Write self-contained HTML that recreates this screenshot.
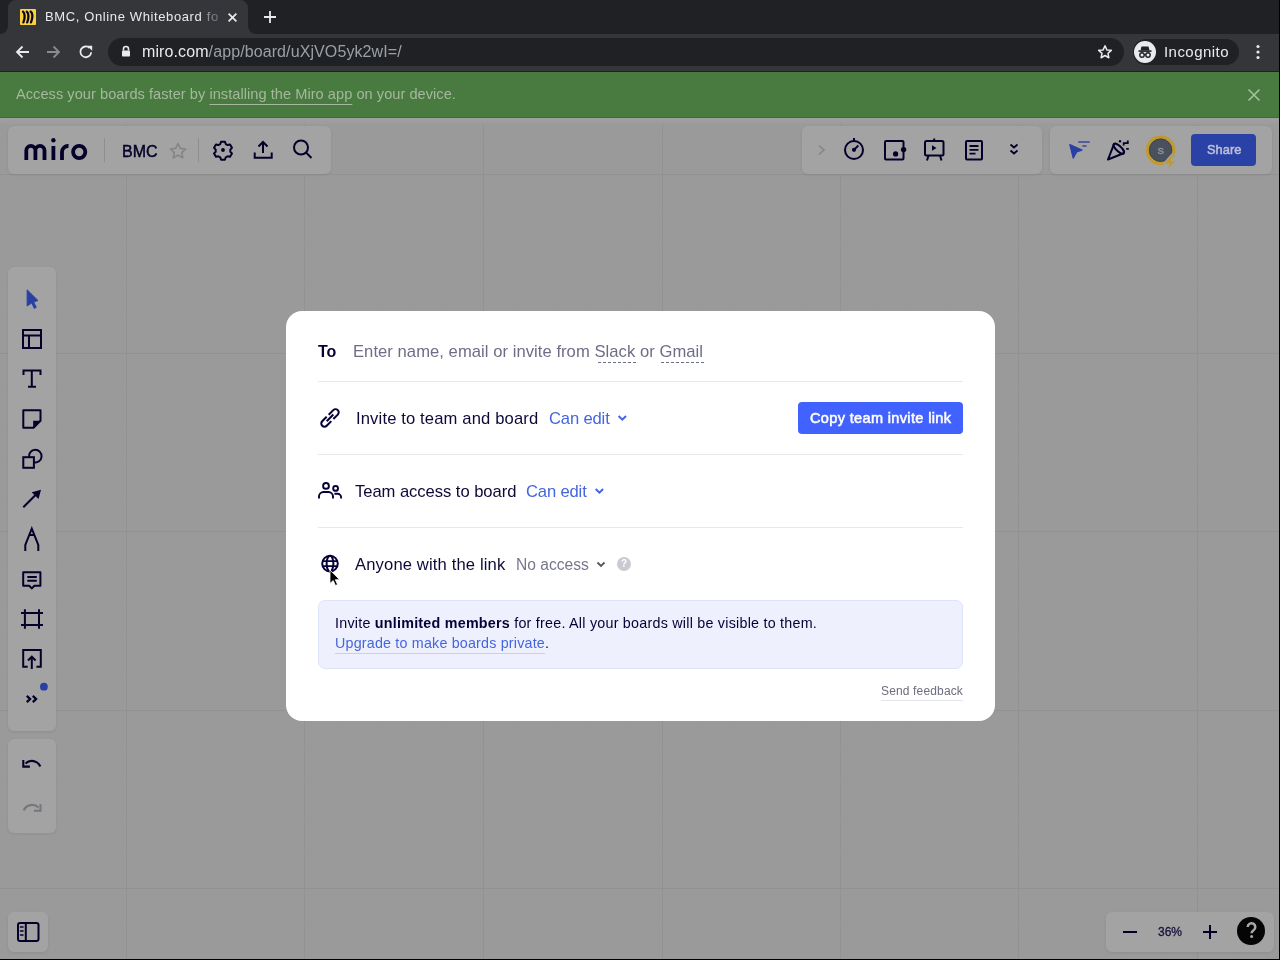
<!DOCTYPE html>
<html><head><meta charset="utf-8">
<style>
*{box-sizing:border-box;margin:0;padding:0}
html,body{width:1280px;height:960px;overflow:hidden;background:#9a9a9a;font-family:"Liberation Sans",sans-serif}
.a{position:absolute}
.t{position:absolute;white-space:nowrap;line-height:1;will-change:transform}
svg{position:absolute;overflow:visible}
</style></head><body>

<!-- ===== Browser chrome ===== -->
<div class="a" style="left:0;top:0;width:1280px;height:34px;background:#202124"></div>
<!-- active tab -->
<div class="a" style="left:8px;top:0;width:240px;height:34px;background:#35363a;border-radius:8px 8px 0 0"></div>
<div class="a" style="left:0;top:26px;width:8px;height:8px;background:#35363a"></div>
<div class="a" style="left:0;top:18px;width:8px;height:16px;background:#202124;border-radius:0 0 8px 0"></div>
<div class="a" style="left:248px;top:26px;width:8px;height:8px;background:#35363a"></div>
<div class="a" style="left:248px;top:18px;width:8px;height:16px;background:#202124;border-radius:0 0 0 8px"></div>
<!-- favicon -->
<div class="a" style="left:20px;top:9px;width:16px;height:16px;background:#fcd13a;border-radius:1px"></div>
<svg style="left:20px;top:9px" width="16" height="16" viewBox="0 0 16 16"><g fill="none" stroke="#0a0620" stroke-width="2.3" stroke-linecap="round"><path d="M3 2.6C5 4 5.2 9 3.4 13.4"/><path d="M6.8 2.6C8.8 4 9 9 7.2 13.4"/><path d="M10.6 2.6C13 4 12.8 9 11 13.4"/></g></svg>
<div class="t" style="left:44.5px;top:10px;font-size:13px;letter-spacing:0.62px;color:#e8eaed">BMC, Online Whiteboard fo</div>
<div class="a" style="left:202px;top:6px;width:24px;height:22px;background:linear-gradient(90deg,rgba(53,54,58,0),rgba(53,54,58,0.45) 4px,rgba(53,54,58,0.7) 16px,#35363a 22px)"></div>
<svg style="left:227.5px;top:12.5px" width="9" height="9" viewBox="0 0 9 9"><path d="M0.6 0.6L8.4 8.4M8.4 0.6L0.6 8.4" stroke="#e8eaed" stroke-width="1.7"/></svg>
<svg style="left:263px;top:10px" width="14" height="14" viewBox="0 0 14 14"><path d="M7 1v12M1 7h12" stroke="#e8eaed" stroke-width="1.8"/></svg>

<!-- toolbar -->
<div class="a" style="left:0;top:34px;width:1280px;height:38px;background:#35363a"></div>
<div class="a" style="left:0;top:71px;width:1280px;height:1px;background:#1f2023"></div>
<svg style="left:15px;top:45px" width="14" height="14" viewBox="0 0 14 14"><path d="M14 7H2M7.5 1.5L2 7l5.5 5.5" stroke="#e8eaed" stroke-width="1.8" fill="none"/></svg>
<svg style="left:47px;top:45px" width="14" height="14" viewBox="0 0 14 14"><path d="M0 7h12M6.5 1.5L12 7l-5.5 5.5" stroke="#8a8b8d" stroke-width="1.8" fill="none"/></svg>
<svg style="left:78px;top:44px" width="16" height="16" viewBox="0 0 16 16"><path d="M13.2 8.2A5.4 5.4 0 1 1 11.6 4" stroke="#e8eaed" stroke-width="1.8" fill="none"/><path d="M9.2 1.8h5v5z" fill="#e8eaed"/></svg>
<div class="a" style="left:108px;top:38px;width:1016px;height:28px;background:#202124;border-radius:14px"></div>
<svg style="left:121px;top:45px" width="10" height="12" viewBox="0 0 10 12"><path d="M2.5 5.5V4a2.5 2.5 0 0 1 5 0v1.5" stroke="#e8eaed" stroke-width="1.6" fill="none"/><rect x="1" y="5.5" width="8" height="6" rx="0.8" fill="#e8eaed"/></svg>
<div class="t" style="left:142px;top:43.5px;font-size:16px;letter-spacing:0.1px;color:#e8eaed">miro.com<span style="color:#9aa0a6">/app/board/uXjVO5yk2wI=/</span></div>
<svg style="left:1097px;top:44px" width="16" height="16" viewBox="0 0 16 16"><path d="M8 1.8l1.85 4.1 4.45.45-3.35 3 .95 4.4L8 11.5l-3.9 2.25.95-4.4-3.35-3 4.45-.45z" stroke="#e8eaed" stroke-width="1.5" fill="none" stroke-linejoin="round"/></svg>
<div class="a" style="left:1133px;top:39px;width:106px;height:26px;background:#202124;border-radius:13px"></div>
<div class="a" style="left:1134px;top:41px;width:22px;height:22px;background:#e8eaed;border-radius:50%"></div>
<svg style="left:1134px;top:41px" width="22" height="22" viewBox="0 0 22 22"><path d="M7.5 5.5h7l1 4h-9z" fill="#202124"/><rect x="4.5" y="9.3" width="13" height="1.6" fill="#202124"/><circle cx="8" cy="14" r="2.2" stroke="#202124" stroke-width="1.4" fill="none"/><circle cx="14" cy="14" r="2.2" stroke="#202124" stroke-width="1.4" fill="none"/><path d="M10.2 13.6h1.6" stroke="#202124" stroke-width="1.2"/></svg>
<div class="t" style="left:1164px;top:43.5px;font-size:15px;letter-spacing:0.45px;color:#e8eaed">Incognito</div>
<svg style="left:1255px;top:44px" width="6" height="16" viewBox="0 0 6 16"><circle cx="3" cy="2.5" r="1.6" fill="#e8eaed"/><circle cx="3" cy="8" r="1.6" fill="#e8eaed"/><circle cx="3" cy="13.5" r="1.6" fill="#e8eaed"/></svg>

<!-- ===== green banner ===== -->
<div class="a" style="left:0;top:72px;width:1280px;height:46px;background:#497b40"></div>
<div class="t" style="left:16px;top:86.6px;font-size:14.6px;letter-spacing:0.04px;color:#a4b89d">Access your boards faster by <span style="text-decoration:underline;text-underline-offset:4.5px;text-decoration-thickness:1.3px">installing the Miro app</span> on your device.</div>
<svg style="left:1248px;top:89px" width="12" height="12" viewBox="0 0 12 12"><path d="M0.5 0.5L11.5 11.5M11.5 0.5L0.5 11.5" stroke="#a9bfa3" stroke-width="1.6"/></svg>

<!-- ===== board ===== -->
<div id="board" class="a" style="left:0;top:118px;width:1279px;height:841px;background:#9a9a9a;overflow:hidden">
<div class="a" style="left:19px;top:0;width:1px;height:842px;background:#999999"></div>
<div class="a" style="left:55px;top:0;width:1px;height:842px;background:#999999"></div>
<div class="a" style="left:90px;top:0;width:1px;height:842px;background:#999999"></div>
<div class="a" style="left:126px;top:0;width:1px;height:842px;background:#929292"></div>
<div class="a" style="left:162px;top:0;width:1px;height:842px;background:#999999"></div>
<div class="a" style="left:197px;top:0;width:1px;height:842px;background:#999999"></div>
<div class="a" style="left:233px;top:0;width:1px;height:842px;background:#999999"></div>
<div class="a" style="left:269px;top:0;width:1px;height:842px;background:#999999"></div>
<div class="a" style="left:304px;top:0;width:1px;height:842px;background:#929292"></div>
<div class="a" style="left:340px;top:0;width:1px;height:842px;background:#999999"></div>
<div class="a" style="left:376px;top:0;width:1px;height:842px;background:#999999"></div>
<div class="a" style="left:412px;top:0;width:1px;height:842px;background:#999999"></div>
<div class="a" style="left:447px;top:0;width:1px;height:842px;background:#999999"></div>
<div class="a" style="left:483px;top:0;width:1px;height:842px;background:#929292"></div>
<div class="a" style="left:519px;top:0;width:1px;height:842px;background:#999999"></div>
<div class="a" style="left:554px;top:0;width:1px;height:842px;background:#999999"></div>
<div class="a" style="left:590px;top:0;width:1px;height:842px;background:#999999"></div>
<div class="a" style="left:626px;top:0;width:1px;height:842px;background:#999999"></div>
<div class="a" style="left:662px;top:0;width:1px;height:842px;background:#929292"></div>
<div class="a" style="left:697px;top:0;width:1px;height:842px;background:#999999"></div>
<div class="a" style="left:733px;top:0;width:1px;height:842px;background:#999999"></div>
<div class="a" style="left:769px;top:0;width:1px;height:842px;background:#999999"></div>
<div class="a" style="left:804px;top:0;width:1px;height:842px;background:#999999"></div>
<div class="a" style="left:840px;top:0;width:1px;height:842px;background:#929292"></div>
<div class="a" style="left:876px;top:0;width:1px;height:842px;background:#999999"></div>
<div class="a" style="left:911px;top:0;width:1px;height:842px;background:#999999"></div>
<div class="a" style="left:947px;top:0;width:1px;height:842px;background:#999999"></div>
<div class="a" style="left:983px;top:0;width:1px;height:842px;background:#999999"></div>
<div class="a" style="left:1018px;top:0;width:1px;height:842px;background:#929292"></div>
<div class="a" style="left:1054px;top:0;width:1px;height:842px;background:#999999"></div>
<div class="a" style="left:1090px;top:0;width:1px;height:842px;background:#999999"></div>
<div class="a" style="left:1126px;top:0;width:1px;height:842px;background:#999999"></div>
<div class="a" style="left:1161px;top:0;width:1px;height:842px;background:#999999"></div>
<div class="a" style="left:1197px;top:0;width:1px;height:842px;background:#929292"></div>
<div class="a" style="left:1233px;top:0;width:1px;height:842px;background:#999999"></div>
<div class="a" style="left:1268px;top:0;width:1px;height:842px;background:#999999"></div>
<div class="a" style="left:0;top:21px;width:1280px;height:1px;background:#999999"></div>
<div class="a" style="left:0;top:56px;width:1280px;height:1px;background:#929292"></div>
<div class="a" style="left:0;top:92px;width:1280px;height:1px;background:#999999"></div>
<div class="a" style="left:0;top:128px;width:1280px;height:1px;background:#999999"></div>
<div class="a" style="left:0;top:164px;width:1280px;height:1px;background:#999999"></div>
<div class="a" style="left:0;top:199px;width:1280px;height:1px;background:#999999"></div>
<div class="a" style="left:0;top:235px;width:1280px;height:1px;background:#929292"></div>
<div class="a" style="left:0;top:271px;width:1280px;height:1px;background:#999999"></div>
<div class="a" style="left:0;top:306px;width:1280px;height:1px;background:#999999"></div>
<div class="a" style="left:0;top:342px;width:1280px;height:1px;background:#999999"></div>
<div class="a" style="left:0;top:378px;width:1280px;height:1px;background:#999999"></div>
<div class="a" style="left:0;top:413px;width:1280px;height:1px;background:#929292"></div>
<div class="a" style="left:0;top:449px;width:1280px;height:1px;background:#999999"></div>
<div class="a" style="left:0;top:485px;width:1280px;height:1px;background:#999999"></div>
<div class="a" style="left:0;top:520px;width:1280px;height:1px;background:#999999"></div>
<div class="a" style="left:0;top:556px;width:1280px;height:1px;background:#999999"></div>
<div class="a" style="left:0;top:592px;width:1280px;height:1px;background:#929292"></div>
<div class="a" style="left:0;top:628px;width:1280px;height:1px;background:#999999"></div>
<div class="a" style="left:0;top:663px;width:1280px;height:1px;background:#999999"></div>
<div class="a" style="left:0;top:699px;width:1280px;height:1px;background:#999999"></div>
<div class="a" style="left:0;top:735px;width:1280px;height:1px;background:#999999"></div>
<div class="a" style="left:0;top:770px;width:1280px;height:1px;background:#929292"></div>
<div class="a" style="left:0;top:806px;width:1280px;height:1px;background:#999999"></div>
<div class="a" style="left:0;top:842px;width:1280px;height:1px;background:#999999"></div>
</div>
<div class="a" style="left:0;top:117px;width:1279px;height:1px;background:#3f6b37"></div>
<div class="a" style="left:0;top:118px;width:1279px;height:6px;background:linear-gradient(#a0a0a0,#9c9c9c)"></div>
<!-- top-left panel -->
<div class="a" style="left:8px;top:126px;width:323px;height:48px;background:#a3a3a3;border-radius:6px;box-shadow:0 1px 3px rgba(0,0,0,0.08)"></div>
<svg style="left:0;top:0" width="1280" height="960" viewBox="0 0 1280 960">
 <g fill="none" stroke="#04002a" stroke-width="3.8">
  <path d="M26.3 160V150.5a4.55 4.55 0 0 1 9.1 0V160M35.4 150.5a4.55 4.55 0 0 1 9.1 0V160"/>
  <path d="M53.4 146V160"/>
  <path d="M62 160V152a6 6 0 0 1 6.5-6"/>
  <circle cx="79.2" cy="152" r="6.1"/>
 </g>
 <circle cx="53.4" cy="140.2" r="2.2" fill="#04002a"/>
 <rect x="104" y="138" width="1" height="24" fill="#8e8e8e"/>
 <rect x="198" y="138" width="1" height="24" fill="#8e8e8e"/>
 <path d="M178 143.5l2.3 4.9 5.3.6-3.9 3.6 1.1 5.2-4.8-2.7-4.8 2.7 1.1-5.2-3.9-3.6 5.3-.6z" fill="none" stroke="#858585" stroke-width="1.6" stroke-linejoin="round"/>
 <!-- gear -->
 <g transform="translate(223 150) scale(0.88)" fill="none" stroke="#04002a" stroke-width="2.25">
  <path d="M-2.2 -9.5h4.4l.9 2.7 2.2 1.2 2.7-.7 2.2 3.8-1.9 2v2.5l1.9 2-2.2 3.8-2.7-.7-2.2 1.2-.9 2.7h-4.4l-.9-2.7-2.2-1.2-2.7.7-2.2-3.8 1.9-2v-2.5l-1.9-2 2.2-3.8 2.7.7 2.2-1.2z" stroke-linejoin="round"/>
 </g>
 <circle cx="223" cy="150" r="1.9" fill="#04002a"/>
 <!-- upload -->
 <g fill="none" stroke="#04002a" stroke-width="2">
  <path d="M263 142v11M258.5 146.5l4.5-4.5 4.5 4.5"/>
  <path d="M254.7 152.5v5.3h17v-5.3"/>
 </g>
 <!-- search -->
 <g fill="none" stroke="#04002a" stroke-width="2">
  <circle cx="301" cy="147.5" r="7"/>
  <path d="M306 152.5l5.5 5.5"/>
 </g>
</svg>

<!-- top-right panel 1 -->
<div class="a" style="left:802px;top:126px;width:240px;height:48px;background:#a3a3a3;border-radius:6px;box-shadow:0 1px 3px rgba(0,0,0,0.08)"></div>
<!-- top-right panel 2 -->
<div class="a" style="left:1050px;top:126px;width:222px;height:48px;background:#a3a3a3;border-radius:6px;box-shadow:0 1px 3px rgba(0,0,0,0.08)"></div>
<svg style="left:0;top:0" width="1280" height="960" viewBox="0 0 1280 960">
 <path d="M819 145.5l5 4.5-5 4.5" fill="none" stroke="#858585" stroke-width="1.6"/>
 <!-- timer -->
 <g fill="none" stroke="#04002a" stroke-width="2">
  <circle cx="854" cy="150" r="9"/>
  <path d="M854 138v3"/>
 </g>
 <path d="M854 149.8l4.3-4.3" stroke="#04002a" stroke-width="1.9"/>
 <circle cx="854" cy="149.8" r="2.1" fill="#04002a"/>
 <!-- card -->
 <rect x="885" y="141" width="18.5" height="18.5" rx="1" fill="none" stroke="#04002a" stroke-width="2"/>
 <circle cx="903.6" cy="149.6" r="2.7" fill="#04002a"/>
 <circle cx="895.6" cy="153.9" r="2.6" fill="#04002a"/>
 <!-- presentation -->
 <g fill="none" stroke="#04002a" stroke-width="2">
  <rect x="925" y="141" width="18.5" height="14.5" rx="1.5"/>
  <path d="M934.2 138.5v2.5M928.5 155.5l-1.5 5M940 155.5l1.5 5"/>
 </g>
 <path d="M932 145.2v5.6l4.5-2.8z" fill="#04002a"/>
 <!-- notes -->
 <rect x="966" y="141" width="16" height="18.5" rx="1" fill="none" stroke="#04002a" stroke-width="2"/>
 <path d="M969.5 146h9M969.5 149.8h9M969.5 153.6h6" stroke="#04002a" stroke-width="1.8"/>
 <!-- double chevron -->
 <path d="M1010.5 144.5l3.5 3 3.5-3M1010.5 150.5l3.5 3 3.5-3" fill="none" stroke="#04002a" stroke-width="1.8"/>
 <!-- cursor filter -->
 <path d="M1069.8 144.5l12.2 5.6-5.3 1.8-3.5 6.3z" fill="#2a3fa3" stroke="#2a3fa3" stroke-width="1.2" stroke-linejoin="round"/>
 <path d="M1078.2 142h11.6M1082.3 146h4.2" stroke="#3a4a9a" stroke-width="1.7"/>
 <!-- party popper -->
 <g fill="none" stroke="#04002a" stroke-width="2" stroke-linejoin="round" stroke-linecap="round">
  <path d="M1114 144.2L1108 159.5 1123.6 153.2"/>
  <ellipse cx="1118.8" cy="148.7" rx="6.8" ry="2.6" transform="rotate(44 1118.8 148.7)"/>
 </g>
 <path d="M1123.7 145.6v-2.5h4.1v-2.6M1126.2 148.8h2.6" fill="none" stroke="#04002a" stroke-width="1.8"/>
 <circle cx="1120" cy="141.2" r="1.2" fill="#04002a"/>
 <!-- avatar -->
 <circle cx="1160.6" cy="150.2" r="13.1" fill="#49505e" stroke="#c09a2a" stroke-width="3.3"/>
 <circle cx="1160.6" cy="150.2" r="11.3" fill="none" stroke="#3a3f4a" stroke-width="0.8"/>
 <text x="1160.6" y="153.8" text-anchor="middle" font-family="Liberation Sans" font-size="9.5" font-weight="400" fill="#8d939b" stroke="#8d939b" stroke-width="0.5">S</text>
 <path d="M1172.2 154.6L1164.3 163.6h4.9l-.8 5 6.6-7.4h-4.4z" fill="#c09a2a" stroke="#a3a3a3" stroke-width="2.2" stroke-linejoin="round" paint-order="stroke"/>
</svg>
<div class="a" style="left:1191px;top:134px;width:65px;height:32px;background:#2a41a6;border-radius:4px"></div>
<div class="t" style="left:1206.5px;top:143.5px;font-size:12.8px;letter-spacing:0.05px;-webkit-text-stroke:0.5px #bcc1d8;color:#bcc1d8">Share</div>

<!-- left toolbar -->
<div class="a" style="left:8px;top:267px;width:48px;height:464px;background:#a3a3a3;border-radius:6px;box-shadow:0 1px 3px rgba(0,0,0,0.08)"></div>
<div class="a" style="left:8px;top:739px;width:48px;height:94px;background:#a3a3a3;border-radius:6px;box-shadow:0 1px 3px rgba(0,0,0,0.08)"></div>
<svg style="left:0;top:0" width="1280" height="960" viewBox="0 0 1280 960">
 <!-- select cursor -->
 <path d="M27.1 289.8L38 300.6l-4.3 1.3 2.6 5.4-2 1.2-2.6-5.5-4.6 3z" fill="#2a3fa3" stroke="#2a3fa3" stroke-width="0.9" stroke-linejoin="round"/>
 <g fill="none" stroke="#04002a" stroke-width="2">
  <!-- template -->
  <rect x="23" y="330" width="18" height="18"/>
  <path d="M23 335.5h18M29 335.5v12.5"/>
  <!-- text T -->
  <path d="M23.5 375v-4.5h17v4.5M31.8 370.5v16.5M28 386.8h8"/>
  <!-- sticky -->
  <path d="M23.3 410.2h17.2v10.5l-7 7h-10.2z" stroke-linejoin="round"/>
  <!-- shapes -->
  <rect x="23.3" y="457.2" width="10.6" height="10.6"/>
  <path d="M33.9 462.3a6.3 6.3 0 1 0-4.8-5.1"/>
  <!-- arrow line -->
  <path d="M23.3 507.3l13-13"/>
  <!-- pen -->
  <path d="M25.3 551v-6l6.5-16.3 6.5 16.3v6M29.5 535h4.6"/>
  <!-- comment -->
  <path d="M23.2 572.2h17.2v13.6h-6l-2.6 2.6-2.6-2.6h-6z" stroke-linejoin="round"/>
  <path d="M27.3 577h9.5M27.3 580.8h9.5"/>
  <!-- frame -->
  <path d="M24.9 609.2v19.5M39 609.2v19.5M21 612.9h22M21 625h22"/>
  <!-- upload/import -->
  <path d="M27.7 666.8h-4.5v-16.8h17.6v16.8h-4.4M31.8 669v-12.2M28 660.5l3.8-3.8 3.8 3.8"/>
 </g>
 <path d="M33.2 420.8h7.3l-7.3 7.2z" fill="#04002a"/>
 <path d="M41 489.8l-9.3 2.5 6.8 6.8z" fill="#04002a"/>
 <!-- >> -->
 <path d="M26.8 695.8l3.3 3.2-3.3 3.2M32.8 695.8l3.3 3.2-3.3 3.2" fill="none" stroke="#04002a" stroke-width="2.3"/>
 <circle cx="43.9" cy="686.7" r="3.9" fill="#2a3fa3"/>
 <!-- undo -->
 <path d="M25.5 763.5a9.2 9.2 0 0 1 14.8 3" fill="none" stroke="#04002a" stroke-width="2.1"/>
 <path d="M23.3 760v6.6h6.6" fill="none" stroke="#04002a" stroke-width="2.1"/>
 <!-- redo -->
 <path d="M38.5 807.5a9.2 9.2 0 0 0-14.8 3" fill="none" stroke="#76767c" stroke-width="2.1"/>
 <path d="M40.5 804.2v6.6h-6.6" fill="none" stroke="#76767c" stroke-width="2.1"/>
</svg>

<!-- bottom-left panel -->
<div class="a" style="left:8px;top:912px;width:40px;height:40px;background:#a3a3a3;border-radius:6px;box-shadow:0 1px 3px rgba(0,0,0,0.08)"></div>
<svg style="left:0;top:0" width="1280" height="960" viewBox="0 0 1280 960">
 <rect x="18" y="923" width="20.5" height="18" rx="2" fill="none" stroke="#04002a" stroke-width="2"/>
 <path d="M25.8 923v18" stroke="#04002a" stroke-width="2"/>
 <path d="M20.5 927h2.5M20.5 931h2.5M20.5 935h2.5" stroke="#04002a" stroke-width="1.6" stroke-linecap="round"/>
</svg>

<!-- bottom-right panel -->
<div class="a" style="left:1106px;top:912px;width:168px;height:40px;background:#a3a3a3;border-radius:6px;box-shadow:0 1px 3px rgba(0,0,0,0.08)"></div>
<svg style="left:0;top:0" width="1280" height="960" viewBox="0 0 1280 960">
 <path d="M1123 932h14M1203 932h14M1210 925v14" stroke="#04002a" stroke-width="2"/>
 <circle cx="1251" cy="931" r="14" fill="#050505"/>
</svg>
<div class="t" style="left:1158px;top:925.8px;font-size:12px;-webkit-text-stroke:0.3px #17133a;color:#17133a">36%</div>
<svg style="left:0;top:0" width="1280" height="960" viewBox="0 0 1280 960"><path d="M1247.7 927a3.8 3.8 0 1 1 5.9 3.2c-1.4 .9-2 1.5-2 3" fill="none" stroke="#a8a8a8" stroke-width="2.5"/><circle cx="1251.6" cy="936.6" r="1.5" fill="#a8a8a8"/></svg>

<div class="t" style="left:121.5px;top:143.5px;font-size:16px;-webkit-text-stroke:0.45px #04002a;color:#04002a">BMC</div>
<!-- ===== modal ===== -->
<div class="a" style="left:286px;top:311px;width:709px;height:410px;background:#fff;border-radius:16px"></div>
<div class="t" style="left:318px;top:343.7px;font-size:16px;font-weight:700;color:#050038">To</div>
<div class="t" style="left:353.4px;top:343.6px;font-size:16.6px;letter-spacing:0.05px;color:#6d6e86">Enter name, email or invite from Slack or Gmail</div>
<div class="a" style="left:598px;top:362px;width:38px;height:1px;background:repeating-linear-gradient(90deg,#6d6e86 0 3px,transparent 3px 5px)"></div>
<div class="a" style="left:661px;top:362px;width:43px;height:1px;background:repeating-linear-gradient(90deg,#6d6e86 0 3px,transparent 3px 5px)"></div>
<div class="a" style="left:318px;top:381px;width:645px;height:1px;background:#e7e7ee"></div>

<svg style="left:0;top:0" width="1280" height="960" viewBox="0 0 1280 960">
 <!-- link -->
 <g transform="translate(330 417.9) rotate(-45) scale(0.86)" fill="none" stroke="#050038" stroke-width="2.4">
  <path d="M1.6 -3.7H9.1A3.7 3.7 0 0 1 9.1 3.7H1.8"/>
  <path d="M-1.6 3.7H-9.1A3.7 3.7 0 0 1 -9.1 -3.7H-1.8"/>
  <path d="M-5.4 0H5.5"/>
 </g>
 <path d="M618.6 416l3.7 3.7 3.7-3.7" fill="none" stroke="#4565dd" stroke-width="2"/>
 <!-- people -->
 <g fill="none" stroke="#050038" stroke-width="1.9">
  <circle cx="326" cy="485.9" r="2.9"/>
  <path d="M319 498.5V496.5a4.5 4.5 0 0 1 4.5-4.5h5a4.5 4.5 0 0 1 4.5 4.5v2"/>
  <circle cx="335.6" cy="488.4" r="2.4"/>
  <path d="M334.4 493.8h3.2a3.5 3.5 0 0 1 3.5 3.5v1.2"/>
 </g>
 <path d="M595.7 489l3.7 3.7 3.7-3.7" fill="none" stroke="#4565dd" stroke-width="2"/>
 <!-- globe -->
 <g fill="none" stroke="#050038" stroke-width="2">
  <circle cx="330" cy="563.6" r="7.8"/>
  <ellipse cx="330" cy="563.6" rx="3.4" ry="7.8"/>
  <path d="M323 561.2h14M323 566.2h14" stroke-width="1.8"/>
 </g>
 <path d="M597.5 562.5l3.5 3.5 3.5-3.5" fill="none" stroke="#555560" stroke-width="1.8"/>
 <circle cx="624" cy="564" r="7" fill="#c9cad3"/>
</svg>
<div class="t" style="left:620.9px;top:559.3px;font-size:10px;font-weight:700;color:#fff">?</div>

<div class="t" style="left:355.5px;top:411px;font-size:16.6px;letter-spacing:0.14px;color:#0d0a38">Invite to team and board</div>
<div class="t" style="left:548.7px;top:411px;font-size:16.6px;letter-spacing:-0.15px;color:#4565dd">Can edit</div>
<div class="a" style="left:798px;top:402px;width:165px;height:32px;background:#4262ff;border-radius:4px"></div>
<div class="t" style="left:809.7px;top:411.15px;font-size:14.5px;letter-spacing:0.36px;-webkit-text-stroke:0.55px #fff;color:#fff">Copy team invite link</div>
<div class="a" style="left:318px;top:454px;width:645px;height:1px;background:#e7e7ee"></div>

<div class="t" style="left:355px;top:484px;font-size:16.6px;letter-spacing:-0.05px;color:#0d0a38">Team access to board</div>
<div class="t" style="left:526.2px;top:484px;font-size:16.6px;letter-spacing:-0.15px;color:#4565dd">Can edit</div>
<div class="a" style="left:318px;top:527px;width:645px;height:1px;background:#e7e7ee"></div>

<div class="t" style="left:355px;top:557px;font-size:16.6px;letter-spacing:0.14px;color:#0d0a38">Anyone with the link</div>
<div class="t" style="left:516.2px;top:557.3px;font-size:15.6px;color:#76778c">No access</div>

<div class="a" style="left:318px;top:600px;width:645px;height:69px;background:#eef1fd;border:1px solid #dde3f8;border-radius:7px"></div>
<div class="t" style="left:335.4px;top:615.6px;font-size:14.3px;letter-spacing:0.24px;color:#050038">Invite <b>unlimited members</b> for free. All your boards will be visible to them.</div>
<div class="t" style="left:335.4px;top:635.5px;font-size:14.3px;letter-spacing:0.19px;color:#4565dd"><span style="border-bottom:1px solid #c9d0ee;padding-bottom:2px">Upgrade to make boards private</span><span style="color:#050038">.</span></div>

<div class="t" style="left:880.5px;top:684.5px;font-size:12px;letter-spacing:0.15px;color:#6b6c80">Send feedback</div>
<div class="a" style="left:880.5px;top:700px;width:82px;height:1px;background:#e4e4ea"></div>

<!-- mouse cursor -->
<svg style="left:0;top:0" width="1280" height="960" viewBox="0 0 1280 960">
 <path d="M330 570v13.5l3.2-3 2.3 5 2-1-2.2-4.8h4.3z" fill="#000" stroke="#fff" stroke-width="0.8" stroke-linejoin="round"/>
</svg>


<!-- right & bottom frame -->
<div class="a" style="left:1279px;top:0;width:1px;height:960px;background:#000"></div>
<div class="a" style="left:0;top:959px;width:1280px;height:1px;background:#000"></div>

</body></html>
